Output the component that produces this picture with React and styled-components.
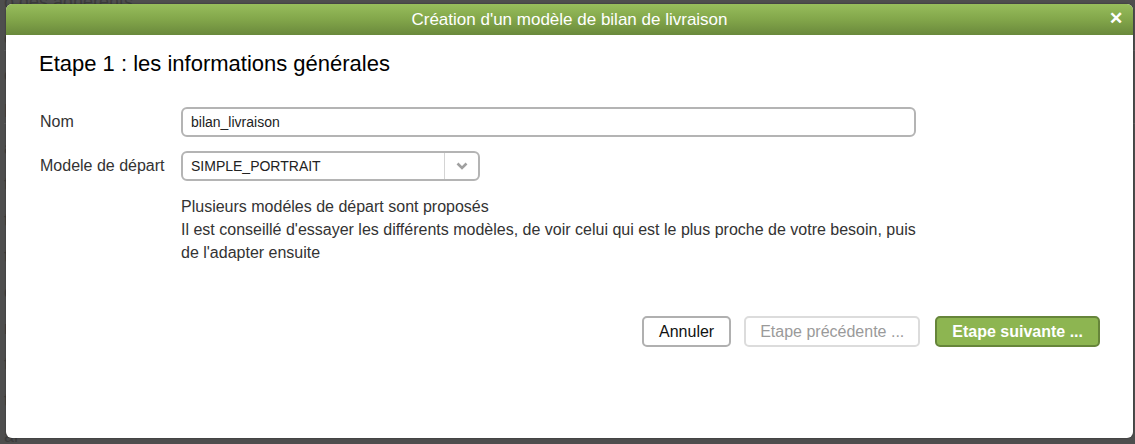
import React from "react";
import styled, { createGlobalStyle } from "styled-components";

const GlobalStyle = createGlobalStyle`
  html, body {
    margin: 0;
    padding: 0;
    background: #4e4e4e;
    font-family: "Liberation Sans", Arial, sans-serif;
    overflow: hidden;
  }
`;

const Backdrop = styled.div`
  width: 1135px;
  height: 444px;
  background: #4e4e4e;
  position: relative;
  overflow: hidden;
`;

const BackPage = styled.div`
  display: flex;
  flex-direction: column;
  gap: 14px;
  padding: 0 0 0 4px;
  margin-top: -8px;
  color: #3c3c3c;
  font-size: 18px;
`;

const BackLine = styled.div`
  height: 22px;
  border-bottom: ${props => (props.ruled ? "1px solid #5a5a5a" : "none")};
`;

const Modal = styled.div`
  position: absolute;
  top: 4px;
  left: 6px;
  width: 1127px;
  height: 434px;
  background: #fff;
  border-radius: 6px;
  display: flex;
  flex-direction: column;
  overflow: hidden;
  box-shadow: 0 0 2px rgba(0, 0, 0, 0.4);
`;

const TitleBar = styled.div`
  height: 31px;
  flex-shrink: 0;
  background: linear-gradient(to bottom, #97bd5c 0%, #82a64a 50%, #6a893c 100%);
  display: flex;
  align-items: center;
  justify-content: center;
  position: relative;
  color: #fff;
  font-size: 17px;
`;

const CloseBtn = styled.span`
  position: absolute;
  right: 10px;
  top: 6px;
  font-size: 17px;
  font-weight: bold;
  line-height: 18px;
  cursor: pointer;
`;

const Body = styled.div`
  padding: 16px 33px 0 33px;
  display: flex;
  flex-direction: column;
`;

const Heading = styled.h2`
  margin: 0 0 30px 0;
  font-size: 22px;
  font-weight: normal;
  color: #000;
  line-height: 26px;
`;

const Form = styled.div`
  display: grid;
  grid-template-columns: 141px 735px;
  row-gap: 14px;
  padding-left: 1px;
`;

const Label = styled.div`
  font-size: 16px;
  color: #333;
  display: flex;
  align-items: center;
  height: 30px;
`;

const TextInput = styled.div`
  height: 26px;
  border: 2px solid #b4b4b4;
  border-radius: 6px;
  display: flex;
  align-items: center;
  padding-left: 8px;
  font-size: 14px;
  color: #222;
`;

const Select = styled.div`
  width: 295px;
  height: 26px;
  border: 2px solid #b4b4b4;
  border-radius: 6px;
  display: flex;
  align-items: stretch;
  font-size: 14px;
  color: #222;
`;

const SelectValue = styled.div`
  flex: 1;
  display: flex;
  align-items: center;
  padding-left: 8px;
`;

const SelectArrow = styled.div`
  width: 33px;
  border-left: 1px solid #d4d4d4;
  display: flex;
  align-items: center;
  justify-content: center;
`;

const Help = styled.div`
  grid-column: 2;
  margin-top: 0;
  font-size: 16px;
  line-height: 23px;
  color: #333;
`;

const Actions = styled.div`
  display: flex;
  justify-content: flex-end;
  gap: 13px;
  margin-top: 52px;
`;

const Button = styled.button`
  height: 31px;
  padding: 0 15px;
  margin-left: ${props => (props.primary ? "2px" : "0")};
  font-family: "Liberation Sans", Arial, sans-serif;
  font-size: 16px;
  border-radius: 5px;
  background: #fff;
  border: 2px solid #b0b0b0;
  color: #111;

  ${props => props.disabled && `
    padding: 0 14px;
    border-color: #dcdcdc;
    color: #9a9a9a;
  `}

  ${props => props.primary && `
    background: #8db551;
    border-color: #66853a;
    color: #fff;
    font-weight: bold;
  `}
`;

const Chevron = () => (
  <svg width="12" height="8" viewBox="0 0 12 8">
    <path d="M1.5 1.5 L6 6 L10.5 1.5" fill="none" stroke="#a0a0a0" strokeWidth="2.6" />
  </svg>
);

export default function App() {
  return (
    <>
      <GlobalStyle />
      <Backdrop>
        <BackPage>
          <BackLine>o des adhérents</BackLine>
          <BackLine ruled>o</BackLine>
          <BackLine>o</BackLine>
          <BackLine ruled>E</BackLine>
          <BackLine>ai</BackLine>
          <BackLine>tr</BackLine>
          <BackLine>ti</BackLine>
          <BackLine>ti</BackLine>
          <BackLine>e</BackLine>
          <BackLine>ni</BackLine>
          <BackLine>ti</BackLine>
          <BackLine>tr</BackLine>
          <BackLine>ai</BackLine>
        </BackPage>
        <Modal>
          <TitleBar>
            Création d'un modèle de bilan de livraison
            <CloseBtn>✕</CloseBtn>
          </TitleBar>
          <Body>
            <Heading>Etape 1 : les informations générales</Heading>
            <Form>
              <Label>Nom</Label>
              <TextInput>bilan_livraison</TextInput>
              <Label>Modele de départ</Label>
              <Select>
                <SelectValue>SIMPLE_PORTRAIT</SelectValue>
                <SelectArrow>
                  <Chevron />
                </SelectArrow>
              </Select>
              <Help>
                Plusieurs modéles de départ sont proposés
                <br />
                Il est conseillé d'essayer les différents modèles, de voir celui qui est le plus proche de votre besoin, puis de l'adapter ensuite
              </Help>
            </Form>
            <Actions>
              <Button>Annuler</Button>
              <Button disabled>Etape précédente ...</Button>
              <Button primary>Etape suivante ...</Button>
            </Actions>
          </Body>
        </Modal>
      </Backdrop>
    </>
  );
}
